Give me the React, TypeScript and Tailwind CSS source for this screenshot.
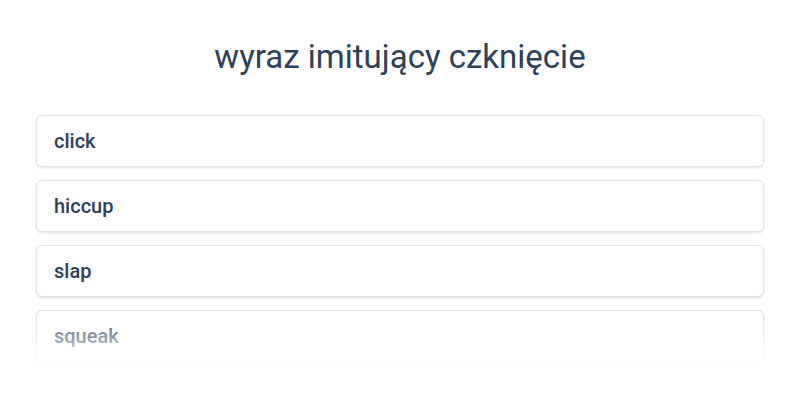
export default function App() {
  const words = ["click", "hiccup", "slap", "squeak"];
  return (
    <div className="h-[400px] w-[800px] bg-white font-['Roboto',sans-serif] text-[#2c3e50]">
      <h1 className="pt-[35px] text-center text-[33px] leading-[44px] font-normal text-[#2d4159]">
        wyraz imitujący czknięcie
      </h1>
      <div className="relative mx-auto mt-[35px] h-[249px] w-[730px] overflow-hidden px-[1px]">
        <div className="flex flex-col gap-[13px] pt-[1px]">
          {words.map((w) => (
            <div
              key={w}
              className="flex h-[52px] items-center rounded-md border border-[#e0e2e5] bg-white px-[17px] text-[20px] font-medium text-[#2d4159] shadow-[0_1px_3px_rgba(0,0,0,0.12)]"
            >
              {w}
            </div>
          ))}
        </div>
        <div className="pointer-events-none absolute bottom-0 left-0 right-0 h-[52px] bg-gradient-to-b from-white/0 to-white/95" />
      </div>
    </div>
  );
}
